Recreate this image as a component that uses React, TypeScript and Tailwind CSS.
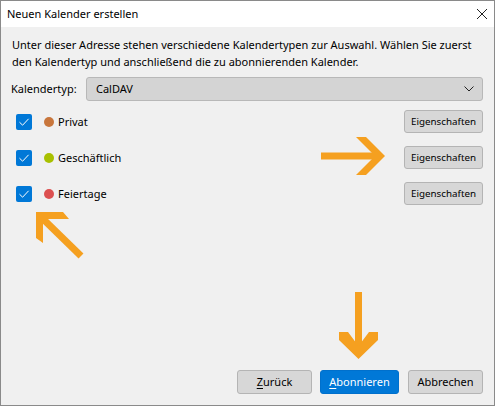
import React from "react";

const font = { fontFamily: '"Noto Sans", "Open Sans", sans-serif' };

function Check() {
  return (
    <div className="w-4 h-4 rounded-[2px] bg-[#0078d7] flex items-center justify-center shrink-0">
      <svg width="12" height="12" viewBox="0 0 12 12">
        <path d="M1.5 6.2 L4.6 9.2 L10.6 2.8" fill="none" stroke="#ffffff" strokeWidth="1" />
      </svg>
    </div>
  );
}

function Row({ color, label }: { color: string; label: string }) {
  return (
    <div className="flex items-center h-[23px]">
      <div className="pl-[5px] flex items-center">
        <Check />
      </div>
      <div className="ml-[12px] w-[10px] h-[10px] rounded-full shrink-0" style={{ backgroundColor: color }} />
      <div className="ml-[4px] text-[11px] text-black leading-none">{label}</div>
      <div className="flex-1" />
      <button className="w-[79px] h-[23px] rounded-[3px] bg-[#d7d7d7] border border-[#b4b4b4] text-[9.8px] text-black leading-none">
        Eigenschaften
      </button>
    </div>
  );
}

export default function App() {
  return (
    <div
      className="relative w-[495px] h-[406px] border border-[#8a8a8a] bg-[#f0f0f0] flex flex-col overflow-hidden"
      style={font}
    >
      <div className="h-[26px] bg-white flex items-center justify-between pl-[6px] pr-[6px] shrink-0">
        <span className="text-[11px] text-black">Neuen Kalender erstellen</span>
        <svg width="12" height="12" viewBox="0 0 12 12">
          <path d="M1 1 L11 11 M11 1 L1 11" stroke="#222" strokeWidth="1" />
        </svg>
      </div>
      <div className="flex-1 flex flex-col pl-[10px] pr-[11px] pt-[9px] pb-[11px]">
        <p className="pl-[1px] text-[11px] leading-[17px] text-black">
          Unter dieser Adresse stehen verschiedene Kalendertypen zur Auswahl. Wählen Sie zuerst den
          Kalendertyp und anschließend die zu abonnierenden Kalender.
        </p>
        <div className="mt-[7px] flex items-center">
          <span className="text-[11px] text-black w-[75px]">Kalendertyp:</span>
          <div className="flex-1 h-[24px] rounded-[3px] bg-[#d4d4d4] border border-[#b8b8b8] flex items-center justify-between pl-[9px] pr-[8px]">
            <span className="text-[11px] text-black">CalDAV</span>
            <svg width="10" height="6" viewBox="0 0 10 6">
              <path d="M0.5 0.5 L5 5 L9.5 0.5" fill="none" stroke="#222" strokeWidth="1" />
            </svg>
          </div>
        </div>
        <div className="mt-[9px] flex flex-col gap-[13px]">
          <Row color="#c8763c" label="Privat" />
          <Row color="#a8c000" label="Geschäftlich" />
          <Row color="#dc5050" label="Feiertage" />
        </div>
        <div className="flex-1" />
        <div className="flex justify-end">
          <button className="w-[75px] h-[24px] rounded-[3px] bg-[#d7d7d7] border border-[#b4b4b4] text-[11px] text-black">
            <span className="underline underline-offset-2">Z</span>urück
          </button>
          <button className="ml-[8px] w-[79px] h-[24px] rounded-[3px] bg-[#0078d7] border border-[#0070cc] text-[11px] text-white">
            <span className="underline underline-offset-2">A</span>bonnieren
          </button>
          <button className="ml-[9px] w-[75px] h-[24px] rounded-[3px] bg-[#d7d7d7] border border-[#b4b4b4] text-[11px] text-black">
            Abbrechen
          </button>
        </div>
      </div>
      <svg
        className="absolute left-[-1px] top-[-1px] pointer-events-none"
        width="495"
        height="406"
        viewBox="0 0 495 406"
      >
        <g fill="#f5a020">
          <polygon points="36,212 63,212 69,219 43,219 43,243 36,238" />
          <polygon points="356,137 366,137 385,156 366,175 356,175 375,156" />
          <rect x="321" y="152.5" width="56" height="7" />
          <rect x="355" y="292" width="7" height="56" />
          <polygon points="339,332 348,332 358.5,346 369,332 378,332 378,340 358.5,359 339,340" />
        </g>
        <line x1="40" y1="216" x2="81" y2="256" stroke="#f5a020" strokeWidth="7" />
      </svg>
    </div>
  );
}
